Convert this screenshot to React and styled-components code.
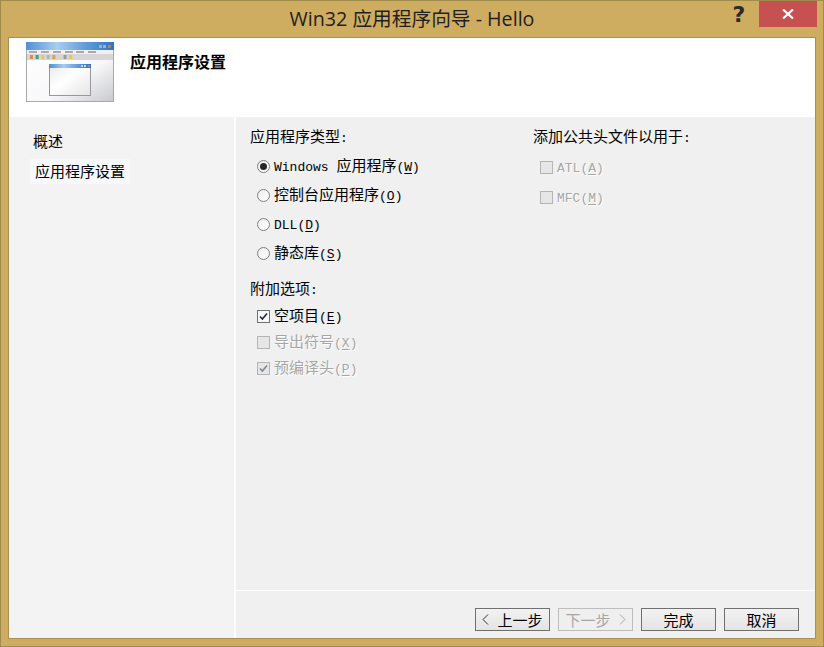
import React from 'react';
import styled, { createGlobalStyle } from 'styled-components';

const GlobalStyle = createGlobalStyle`
  html, body {
    margin: 0;
    padding: 0;
    background: #cfad60;
  }
  body {
    font-family: "Noto Sans CJK SC", "Liberation Sans", sans-serif;
    font-size: 15px;
    color: #000;
  }
`;

const WizardIcon = () => (
  <svg width="88" height="60" viewBox="0 0 88 60">
    <defs>
      <linearGradient id="bar" x1="0" x2="1" y1="0" y2="0">
        <stop offset="0" stopColor="#4f8fd0" />
        <stop offset="0.35" stopColor="#a9cdee" />
        <stop offset="0.7" stopColor="#5d9ad6" />
        <stop offset="1" stopColor="#2f74c0" />
      </linearGradient>
      <linearGradient id="pane" x1="0" x2="1" y1="0" y2="1">
        <stop offset="0" stopColor="#ffffff" />
        <stop offset="0.6" stopColor="#f8f8fa" />
        <stop offset="1" stopColor="#c8c9ce" />
      </linearGradient>
      <linearGradient id="inner" x1="0" x2="1" y1="0" y2="1">
        <stop offset="0" stopColor="#e9e9ec" />
        <stop offset="0.45" stopColor="#ffffff" />
        <stop offset="1" stopColor="#e4e4e6" />
      </linearGradient>
    </defs>
    <rect x="0.5" y="0.5" width="87" height="59" fill="url(#pane)" stroke="#a8a8ac" />
    <rect x="0" y="0" width="88" height="8" fill="url(#bar)" />
    <rect x="73" y="3" width="3" height="3" fill="#8fb4e0" />
    <rect x="77" y="3" width="3" height="3" fill="#8fb4e0" />
    <rect x="82" y="3" width="3" height="3" fill="#d9705a" />
    <rect x="1" y="8" width="86" height="4" fill="#f0f0f2" />
    {[3, 15, 27, 39, 50, 62].map((x) => (
      <rect key={x} x={x} y="9" width="8" height="2" fill="#a8a8ae" />
    ))}
    <rect x="1" y="12" width="86" height="6" fill="#d6d6d8" />
    {['#e08a4a', '#4f9a80', '#e6c860', '#b8b8a8', '#e0a040', '#d8d8c8', '#9a9a9a', '#f0c830'].map((c, i) => (
      <rect key={i} x={4 + i * 5.6} y="13" width="3" height="4" fill={c} />
    ))}
    <rect x="23.5" y="22.5" width="41" height="31" fill="url(#inner)" stroke="#98989c" />
    <rect x="23" y="22" width="42" height="4" fill="url(#bar)" />
    <rect x="55" y="23" width="2" height="2" fill="#c8d8ec" />
    <rect x="58" y="23" width="2" height="2" fill="#c8d8ec" />
    <rect x="62" y="23" width="2" height="2" fill="#d9705a" />
  </svg>
);

const Window = styled.div`
  box-sizing: border-box;
  width: 824px;
  height: 647px;
  display: flex;
  flex-direction: column;
  padding: 0 7px 7px;
  background: #cfad60;
  border: 1px solid #a08a4c;
`;

const TitleBar = styled.div`
  height: 36px;
  flex: none;
  display: grid;
  grid-template-columns: 1fr auto 1fr;
  align-items: start;
`;

const Title = styled.div`
  grid-column: 2;
  font-family: "Open Sans", "Noto Sans CJK SC", sans-serif;
  font-size: 19.7px;
  line-height: 36px;
  color: #1f1f1f;
`;

const Controls = styled.div`
  grid-column: 3;
  justify-self: end;
  display: flex;
  align-items: flex-start;
`;

const HelpButton = styled.div`
  width: 30px;
  margin-right: 5px;
  text-align: center;
  font-family: "DejaVu Sans", sans-serif;
  font-weight: 700;
  font-size: 22px;
  line-height: 27px;
  color: #2a2a2a;
`;

const CloseButton = styled.div`
  width: 58px;
  height: 26px;
  display: flex;
  align-items: center;
  justify-content: center;
  background: #c75050;
  margin-right: -1px;
`;

const Client = styled.div`
  flex: 1;
  min-height: 0;
  display: flex;
  flex-direction: column;
  border: 1px solid #a89050;
  background: #fff;
`;

const Header = styled.div`
  box-sizing: border-box;
  height: 79px;
  flex: none;
  display: flex;
  align-items: flex-start;
  gap: 16px;
  padding: 4px 0 0 17px;
  background: #fff;
`;

const HeaderTitle = styled.div`
  font-size: 16px;
  font-weight: 700;
  line-height: 22px;
  margin-top: 8px;
`;

const Body = styled.div`
  flex: 1;
  min-height: 0;
  display: flex;
  gap: 2px;
`;

const Sidebar = styled.div`
  width: 225px;
  flex: none;
  display: flex;
  flex-direction: column;
  align-items: flex-start;
  padding: 11px 0 0 21px;
  box-sizing: border-box;
  background: #f3f3f3;
`;

const NavItem = styled.div`
  height: 25px;
  line-height: ${(p) => (p.$active ? '23px' : '25px')};
  padding: 0 ${(p) => (p.$active ? '5px' : '3px')};
  margin-bottom: ${(p) => (p.$active ? '0' : '6px')};
  background: ${(p) => (p.$active ? '#f6f8fc' : 'transparent')};
`;

const Main = styled.div`
  flex: 1;
  min-width: 0;
  display: flex;
  flex-direction: column;
  background: #f0f0f0;
`;

const Content = styled.div`
  flex: 1;
  min-height: 0;
  display: grid;
  grid-template-columns: 283px 1fr;
  padding: 8px 0 0 14px;
`;

const Column = styled.div`
  display: flex;
  flex-direction: column;
  align-items: flex-start;
`;

const Heading = styled.div`
  height: 22px;
  line-height: 22px;
  margin-top: ${(p) => p.$top || 0};
`;

const Options = styled.div`
  display: flex;
  flex-direction: column;
  margin-top: ${(p) => p.$top};
  padding-left: 7px;
`;

const Option = styled.div`
  height: ${(p) => p.$height};
  display: flex;
  align-items: center;
  gap: 4px;
  line-height: 22px;
  white-space: nowrap;
  color: ${(p) => (p.$disabled ? '#a6a6a6' : '#000')};
  text-shadow: ${(p) => (p.$disabled ? '1px 1px 0 #fff' : 'none')};
`;

const Radio = styled.span`
  box-sizing: border-box;
  width: 13px;
  height: 13px;
  flex: none;
  display: flex;
  align-items: center;
  justify-content: center;
  border: 1px solid #7f7f7f;
  border-radius: 50%;
  background: linear-gradient(135deg, #ececec, #ffffff);
  &::after {
    content: "";
    width: 7px;
    height: 7px;
    border-radius: 50%;
    background: ${(p) => (p.$checked ? '#262626' : 'transparent')};
  }
`;

const Box = styled.span`
  box-sizing: border-box;
  width: 13px;
  height: 13px;
  flex: none;
  display: flex;
  align-items: center;
  justify-content: center;
  border: 1px solid ${(p) => (p.$disabled ? '#b4b4b4' : '#6f6f6f')};
  background: ${(p) => (p.$disabled ? '#e6e6e6' : '#f8f8f8')};
`;

const Latin = styled.span`
  font-family: "Liberation Mono", monospace;
  font-size: 13px;
`;

const Key = styled.span`
  text-decoration: underline;
  text-underline-offset: 2px;
`;

const Footer = styled.div`
  height: 48px;
  flex: none;
  display: flex;
  justify-content: flex-end;
  align-items: flex-start;
  gap: 8px;
  padding: 17px 16px 0 0;
  box-sizing: border-box;
  border-top: 1px solid #fff;
  background: #f0f0f0;
`;

const Button = styled.div`
  box-sizing: border-box;
  width: 75px;
  height: 23px;
  display: flex;
  align-items: center;
  justify-content: center;
  gap: 8px;
  font-size: 15px;
  border: 1px solid ${(p) => (p.$disabled ? '#bdbdbd' : '#707070')};
  background: ${(p) => (p.$disabled ? '#efefef' : 'linear-gradient(#f2f2f2, #e4e4e4)')};
  color: ${(p) => (p.$disabled ? '#a6a6a6' : '#000')};
`;

const Chevron = styled.svg`
  flex: none;
`;

const Tick = ({ disabled }) => (
  <svg width="11" height="11" viewBox="0 0 11 11">
    <path
      d="M2 5.5 L4.4 8 L9 2.5"
      fill="none"
      stroke={disabled ? '#7d8794' : '#222b38'}
      strokeWidth="1.6"
    />
  </svg>
);

const Mnemonic = ({ k }) => (
  <Latin>
    (<Key>{k}</Key>)
  </Latin>
);

const RadioOption = ({ checked, children }) => (
  <Option $height="29px">
    <Radio $checked={checked} />
    <span>{children}</span>
  </Option>
);

const CheckOption = ({ checked, disabled, height, children }) => (
  <Option $disabled={disabled} $height={height}>
    <Box $disabled={disabled}>{checked && <Tick disabled={disabled} />}</Box>
    <span>{children}</span>
  </Option>
);

const App = () => {
  return (
    <>
      <GlobalStyle />
      <Window>
        <TitleBar>
          <Title>Win32 应用程序向导 - Hello</Title>
          <Controls>
            <HelpButton>?</HelpButton>
            <CloseButton>
              <svg width="12" height="10" viewBox="0 0 12 10">
                <path d="M1 0.5 L11 9.5 M11 0.5 L1 9.5" stroke="#fff" strokeWidth="2.2" fill="none" />
              </svg>
            </CloseButton>
          </Controls>
        </TitleBar>
        <Client>
          <Header>
            <WizardIcon />
            <HeaderTitle>应用程序设置</HeaderTitle>
          </Header>
          <Body>
            <Sidebar>
              <NavItem>概述</NavItem>
              <NavItem $active>应用程序设置</NavItem>
            </Sidebar>
            <Main>
              <Content>
                <Column>
                  <Heading>应用程序类型<Latin>:</Latin></Heading>
                  <Options $top="5px">
                    <RadioOption checked>
                      <Latin>Windows </Latin>应用程序<Mnemonic k="W" />
                    </RadioOption>
                    <RadioOption>
                      控制台应用程序<Mnemonic k="O" />
                    </RadioOption>
                    <RadioOption>
                      <Latin>DLL</Latin>
                      <Mnemonic k="D" />
                    </RadioOption>
                    <RadioOption>
                      静态库<Mnemonic k="S" />
                    </RadioOption>
                  </Options>
                  <Heading $top="9px">附加选项<Latin>:</Latin></Heading>
                  <Options $top="4px">
                    <CheckOption checked height="26px">
                      空项目<Mnemonic k="E" />
                    </CheckOption>
                    <CheckOption disabled height="26px">
                      导出符号<Mnemonic k="X" />
                    </CheckOption>
                    <CheckOption checked disabled height="26px">
                      预编译头<Mnemonic k="P" />
                    </CheckOption>
                  </Options>
                </Column>
                <Column>
                  <Heading>添加公共头文件以用于<Latin>:</Latin></Heading>
                  <Options $top="5px">
                    <CheckOption disabled height="30px">
                      <Latin>ATL</Latin>
                      <Mnemonic k="A" />
                    </CheckOption>
                    <CheckOption disabled height="30px">
                      <Latin>MFC</Latin>
                      <Mnemonic k="M" />
                    </CheckOption>
                  </Options>
                </Column>
              </Content>
              <Footer>
                <Button>
                  <Chevron width="7" height="11" viewBox="0 0 7 11">
                    <path d="M6 0.5 L1 5.5 L6 10.5" fill="none" stroke="#333" />
                  </Chevron>
                  上一步
                </Button>
                <Button $disabled>
                  下一步
                  <Chevron width="7" height="11" viewBox="0 0 7 11">
                    <path d="M1 0.5 L6 5.5 L1 10.5" fill="none" stroke="#a6a6a6" />
                  </Chevron>
                </Button>
                <Button>完成</Button>
                <Button>取消</Button>
              </Footer>
            </Main>
          </Body>
        </Client>
      </Window>
    </>
  );
};

export default App;
